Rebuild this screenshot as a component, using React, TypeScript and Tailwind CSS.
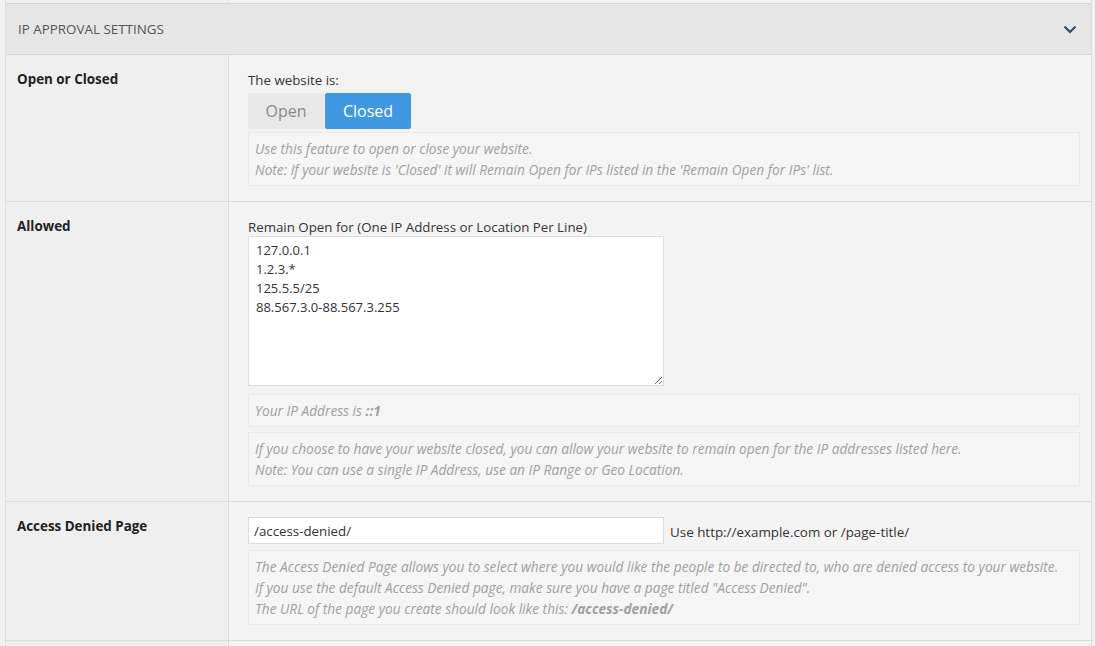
import { useState } from "react";

const font = { fontFamily: '"Open Sans", "Noto Sans", sans-serif' };

function Note({ children }: { children: React.ReactNode }) {
  return (
    <div className="border border-[#e9e9e9] bg-[#f5f5f5] px-[6px] py-[5px] text-[13.7px] leading-[21px] italic text-[#a0a0a0]">
      {children}
    </div>
  );
}

function Row({ label, children }: { label: string; children: React.ReactNode }) {
  return (
    <div className="grid grid-cols-[223px_1fr] border-b border-[#dcdcdc]">
      <div className="bg-[#efefef] border-r border-[#dcdcdc] pl-[11px] pt-[14px] text-[13.4px] leading-[20px] font-bold text-[#222]">
        {label}
      </div>
      <div className="bg-[#f3f3f3] pl-[19px] pr-[11px] pt-[15px] pb-[15px]">{children}</div>
    </div>
  );
}

export default function App() {
  const [closed, setClosed] = useState(true);
  const [ips, setIps] = useState("127.0.0.1\n1.2.3.*\n125.5.5/25\n88.567.3.0-88.567.3.255");
  const [page, setPage] = useState("/access-denied/");

  return (
    <div className="min-h-[646px] bg-[#f1f1f1] pl-[5px] pr-[3px]" style={font}>
      <div className="border-x border-[#dcdcdc]">
        {/* tail of the previous section */}
        <div className="grid grid-cols-[223px_1fr] h-[3px]">
          <div className="bg-[#efefef] border-r border-[#dcdcdc]" />
          <div className="bg-[#f3f3f3]" />
        </div>

        <div className="flex items-center justify-between h-[52px] bg-[#e6e6e6] border-y border-[#d6d6d6] pl-[12px] pr-[14px]">
          <span className="text-[13.4px] uppercase text-[#555]">IP Approval Settings</span>
          <svg width="14" height="10" viewBox="0 0 14 10" fill="none">
            <path d="M1.5 2.5 L7 8 L12.5 2.5" stroke="#2b4a66" strokeWidth="2" />
          </svg>
        </div>

        <Row label="Open or Closed">
          <div className="text-[13.3px] leading-[20px] text-[#333] pb-[3px]">The website is:</div>
          <div className="flex gap-px">
            <button
              onClick={() => setClosed(false)}
              className={"h-[36px] w-[76px] rounded-[2px] text-[16px] " + (closed ? "bg-[#e8e8e8] text-[#8a8a8a]" : "bg-[#4097e3] text-white")}
            >
              Open
            </button>
            <button
              onClick={() => setClosed(true)}
              className={"h-[36px] w-[86px] rounded-[2px] text-[16px] " + (closed ? "bg-[#4097e3] text-white" : "bg-[#e8e8e8] text-[#8a8a8a]")}
            >
              Closed
            </button>
          </div>
          <div className="mt-[3px]">
            <Note>
              Use this feature to open or close your website.
              <br />
              Note: If your website is 'Closed' it will Remain Open for IPs listed in the 'Remain Open for IPs' list.
            </Note>
          </div>
        </Row>

        <Row label="Allowed">
          <div className="text-[13.3px] leading-[20px] text-[#333] -mb-px">Remain Open for (One IP Address or Location Per Line)</div>
          <textarea
            value={ips}
            onChange={(e) => setIps(e.target.value)}
            className="block w-[416px] h-[150px] border border-[#dcdcdc] bg-white px-[7px] py-[4px] text-[13px] leading-[19px] text-[#333] outline-none"
          />
          <div className="mt-[8px]">
            <Note>
              Your IP Address is <b>::1</b>
            </Note>
          </div>
          <div className="mt-[5px]">
            <Note>
              If you choose to have your website closed, you can allow your website to remain open for the IP addresses listed here.
              <br />
              Note: You can use a single IP Address, use an IP Range or Geo Location.
            </Note>
          </div>
        </Row>

        <Row label="Access Denied Page">
          <div className="flex items-center gap-[6px]">
            <input
              value={page}
              onChange={(e) => setPage(e.target.value)}
              className="w-[416px] h-[27px] border border-[#dcdcdc] bg-white px-[5px] text-[13.3px] text-[#333] outline-none"
            />
            <span className="text-[13.4px] text-[#333] pt-[3px]">Use http://example.com or /page-title/</span>
          </div>
          <div className="mt-[6px]">
            <Note>
              The Access Denied Page allows you to select where you would like the people to be directed to, who are denied access to your website.
              <br />
              If you use the default Access Denied page, make sure you have a page titled "Access Denied".
              <br />
              The URL of the page you create should look like this: <b>/access-denied/</b>
            </Note>
          </div>
        </Row>

        <div className="grid grid-cols-[223px_1fr] h-[10px]">
          <div className="bg-[#efefef] border-r border-[#dcdcdc]" />
          <div className="bg-[#f3f3f3]" />
        </div>
      </div>
    </div>
  );
}
